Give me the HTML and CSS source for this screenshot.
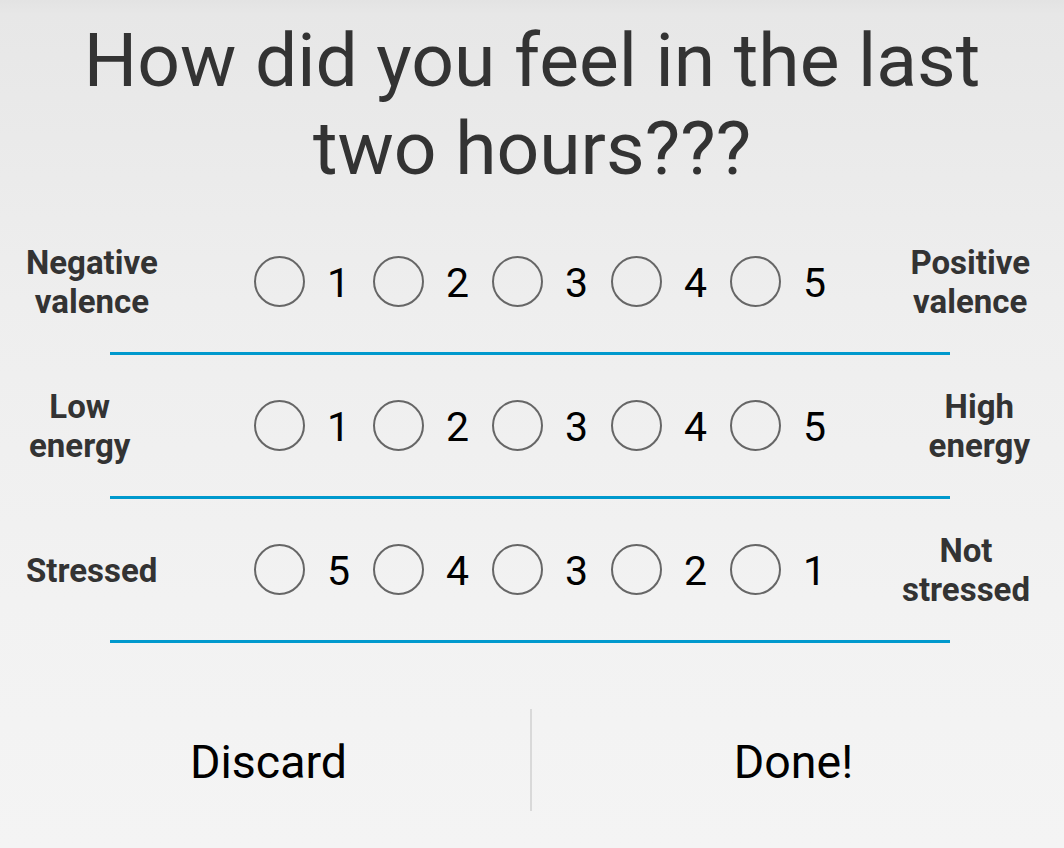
FILE: index.html
```html
<!DOCTYPE html>
<html>
<head>
<meta charset="utf-8">
<link rel="stylesheet" href="styles.css">
</head>
<body>
<div class="dialog">
  <h1 class="title">How did you feel in the last<br>two hours???</h1>

  <div class="scale">
    <div class="row">
      <div class="label label-left">Negative<br>valence</div>
      <div class="radios">
        <div class="radio"><span class="circle"></span><span class="num">1</span></div>
        <div class="radio"><span class="circle"></span><span class="num">2</span></div>
        <div class="radio"><span class="circle"></span><span class="num">3</span></div>
        <div class="radio"><span class="circle"></span><span class="num">4</span></div>
        <div class="radio"><span class="circle"></span><span class="num">5</span></div>
      </div>
      <div class="label label-right">Positive<br>valence</div>
    </div>
    <div class="rule"></div>
  </div>

  <div class="scale">
    <div class="row">
      <div class="label label-left label-low">Low<br>energy</div>
      <div class="radios">
        <div class="radio"><span class="circle"></span><span class="num">1</span></div>
        <div class="radio"><span class="circle"></span><span class="num">2</span></div>
        <div class="radio"><span class="circle"></span><span class="num">3</span></div>
        <div class="radio"><span class="circle"></span><span class="num">4</span></div>
        <div class="radio"><span class="circle"></span><span class="num">5</span></div>
      </div>
      <div class="label label-right">High<br>energy</div>
    </div>
    <div class="rule"></div>
  </div>

  <div class="scale">
    <div class="row">
      <div class="label label-left">Stressed</div>
      <div class="radios">
        <div class="radio"><span class="circle"></span><span class="num">5</span></div>
        <div class="radio"><span class="circle"></span><span class="num">4</span></div>
        <div class="radio"><span class="circle"></span><span class="num">3</span></div>
        <div class="radio"><span class="circle"></span><span class="num">2</span></div>
        <div class="radio"><span class="circle"></span><span class="num">1</span></div>
      </div>
      <div class="label label-right">Not<br>stressed</div>
    </div>
    <div class="rule"></div>
  </div>

  <div class="buttons">
    <div class="btn btn-left">Discard</div>
    <div class="divider"></div>
    <div class="btn btn-right">Done!</div>
  </div>
</div>
</body>
</html>
```

FILE: styles.css
```css
html, body {
  margin: 0;
  padding: 0;
}

body {
  width: 1064px;
  height: 848px;
  overflow: hidden;
  font-family: Roboto, "Noto Sans", sans-serif;
  background: linear-gradient(to bottom, #e3e3e3 0px, #e7e7e7 14px, #eeeeee 300px, #f2f2f2 600px, #f4f4f4 848px);
}

.dialog {
  display: flex;
  flex-direction: column;
  padding-top: 16px;
}

.title {
  margin: 0 0 39px;
  font-weight: 400;
  font-size: 75px;
  line-height: 88px;
  color: #333333;
  text-align: center;
}

.scale {
  display: flex;
  flex-direction: column;
  margin-bottom: 20px;
}

.row {
  display: grid;
  grid-template-columns: 254px auto 1fr;
  align-items: center;
  height: 100px;
  margin-bottom: 21px;
}

.label {
  font-weight: 700;
  font-size: 33px;
  line-height: 39px;
  padding-top: 2px;
  color: #333333;
  text-align: center;
}

.label-left {
  justify-self: start;
  padding-left: 26px;
}

.label-low {
  padding-left: 29px;
}

.label-right {
  justify-self: end;
  padding-right: 34px;
}

.radios {
  display: flex;
}

.radio {
  display: flex;
  align-items: center;
  width: 119px;
}

.circle {
  box-sizing: border-box;
  width: 51px;
  height: 51px;
  border: 2px solid #666666;
  border-radius: 50%;
  margin-right: 22px;
}

.num {
  font-size: 41px;
  line-height: 48px;
  padding-top: 3px;
  color: #000000;
}

.rule {
  height: 3px;
  margin: 0 114px 0 110px;
  background: #0099cd;
}

.buttons {
  display: flex;
  align-items: stretch;
  height: 102px;
  margin-top: 46px;
}

.btn {
  flex: 1;
  display: flex;
  align-items: center;
  justify-content: center;
  padding-top: 4px;
  font-size: 46.5px;
  color: #000000;
}

.btn-left {
  padding-left: 7px;
}

.btn-right {
  padding-right: 9px;
}

.divider {
  width: 2px;
  background: #d9d9d9;
}
```
